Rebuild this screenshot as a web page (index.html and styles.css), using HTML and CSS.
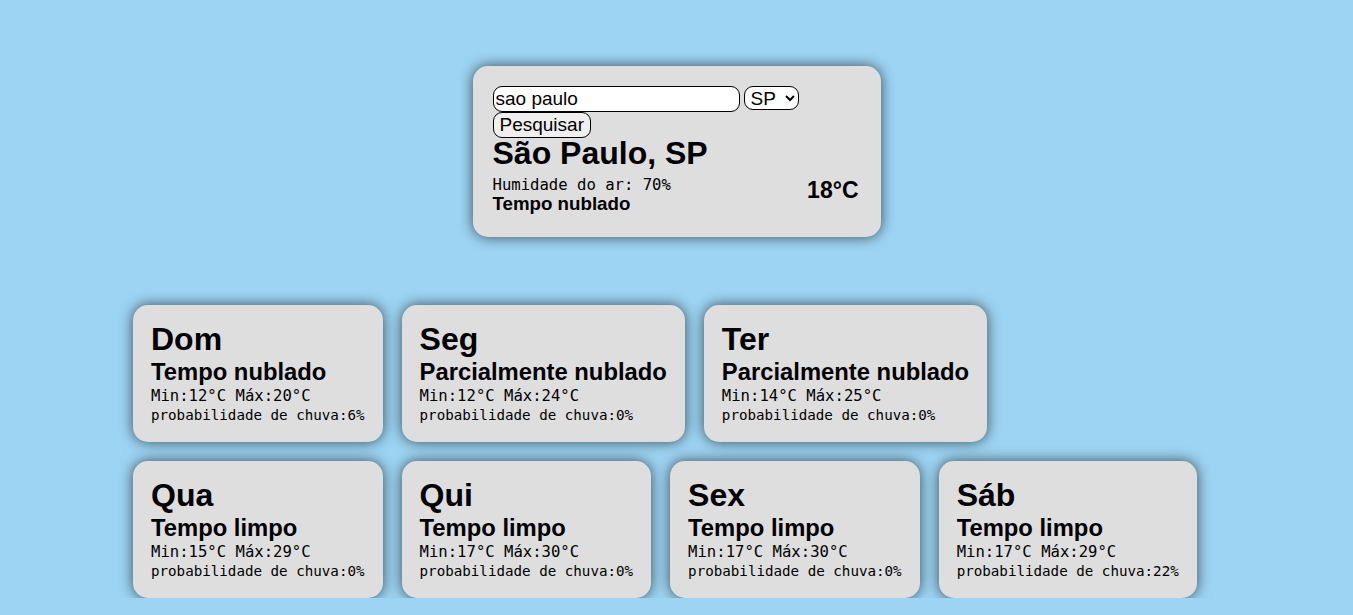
FILE: index.html
```html
<!DOCTYPE html>
<html lang="pt-BR">
<head>
    <meta charset="UTF-8">
    <meta name="viewport" content="width=device-width, initial-scale=1.0">
    <title>Previsão do Tempo</title>
    <link rel="stylesheet" href="styles.css">
</head>
<body>
    <!-- Cartão principal com a busca e o tempo atual -->
    <div class="clima-atual">
        <form class="busca">
            <div class="busca-linha">
                <input type="text" class="busca-cidade" value="sao paulo">
                <select class="busca-estado">
                    <option>SP</option>
                </select>
            </div>
            <button type="button" class="busca-botao">Pesquisar</button>
        </form>

        <h1>São Paulo, SP</h1>

        <div class="clima-info">
            <div>
                <p class="umidade">Humidade do ar: 70%</p>
                <p class="descricao">Tempo nublado</p>
            </div>
            <span class="temperatura">18°C</span>
        </div>
    </div>

    <!-- Previsão dos próximos dias -->
    <div class="previsao">
        <div class="dia">
            <h2>Dom</h2>
            <p class="dia-descricao">Tempo nublado</p>
            <p class="dia-temp">Min:12°C Máx:20°C</p>
            <p class="dia-chuva">probabilidade de chuva:6%</p>
        </div>
        <div class="dia">
            <h2>Seg</h2>
            <p class="dia-descricao">Parcialmente nublado</p>
            <p class="dia-temp">Min:12°C Máx:24°C</p>
            <p class="dia-chuva">probabilidade de chuva:0%</p>
        </div>
        <div class="dia">
            <h2>Ter</h2>
            <p class="dia-descricao">Parcialmente nublado</p>
            <p class="dia-temp">Min:14°C Máx:25°C</p>
            <p class="dia-chuva">probabilidade de chuva:0%</p>
        </div>
        <div class="dia">
            <h2>Qua</h2>
            <p class="dia-descricao">Tempo limpo</p>
            <p class="dia-temp">Min:15°C Máx:29°C</p>
            <p class="dia-chuva">probabilidade de chuva:0%</p>
        </div>
        <div class="dia">
            <h2>Qui</h2>
            <p class="dia-descricao">Tempo limpo</p>
            <p class="dia-temp">Min:17°C Máx:30°C</p>
            <p class="dia-chuva">probabilidade de chuva:0%</p>
        </div>
        <div class="dia">
            <h2>Sex</h2>
            <p class="dia-descricao">Tempo limpo</p>
            <p class="dia-temp">Min:17°C Máx:30°C</p>
            <p class="dia-chuva">probabilidade de chuva:0%</p>
        </div>
        <div class="dia">
            <h2>Sáb</h2>
            <p class="dia-descricao">Tempo limpo</p>
            <p class="dia-temp">Min:17°C Máx:29°C</p>
            <p class="dia-chuva">probabilidade de chuva:22%</p>
        </div>
    </div>
</body>
</html>
```

FILE: styles.css
```css
body {
    font-family: 'Liberation Sans', Arial, sans-serif;
    background-color: #9dd4f3;
    margin: 0;
    padding-top: 66px;
}

p {
    margin: 0;
}

/* Cartão do tempo atual */
.clima-atual {
    width: 366px;
    margin: 0 auto;
    padding: 20px 22px 23px 20px;
    background-color: #dedede;
    border-radius: 15px;
    box-shadow: 0 0 14px rgba(0, 0, 0, 0.65);
}

.busca-linha {
    display: flex;
    align-items: flex-start;
    gap: 4px;
}

.busca input,
.busca select,
.busca button {
    font-family: 'Liberation Sans', Arial, sans-serif;
    font-size: 19px;
    color: #000000;
    border: 1px solid #000000;
    border-radius: 9px;
    box-sizing: border-box;
    margin: 0;
}

.busca-cidade {
    width: 247px;
    height: 26px;
    padding: 0 2px;
    background: #ffffff;
}

.busca-estado {
    width: 55px;
    height: 24px;
    padding: 0 2px;
    background: #ffffff;
}

.busca-botao {
    display: block;
    height: 26px;
    padding: 0 6px;
    background: #efefef;
}

.clima-atual h1 {
    font-size: 32px;
    margin: 0;
    line-height: 30px;
}

.clima-info {
    display: flex;
    justify-content: space-between;
    align-items: flex-start;
    margin-top: 9px;
}

.umidade {
    font-family: 'DejaVu Sans Mono', monospace;
    font-size: 15.6px;
    line-height: 17px;
}

.descricao {
    font-weight: bold;
    font-size: 18.72px;
    line-height: 20px;
}

.temperatura {
    font-weight: bold;
    font-size: 23px;
    line-height: 24px;
    margin-top: 1px;
}

/* Previsão dos próximos dias */
.previsao {
    display: flex;
    flex-wrap: wrap;
    gap: 19px;
    width: 1087px;
    margin: 68px auto 0;
}

.dia {
    background-color: #dedede;
    padding: 15px 18px 17px 18px;
    border-radius: 15px;
    box-shadow: 0 0 14px rgba(0, 0, 0, 0.65);
}

.dia h2 {
    font-size: 32px;
    margin: 0;
    line-height: 38px;
}

.dia-descricao {
    font-weight: bold;
    font-size: 23.8px;
    line-height: 28px;
}

.dia-temp {
    font-family: 'DejaVu Sans Mono', monospace;
    font-size: 15.6px;
    line-height: 20px;
}

.dia-chuva {
    font-family: 'DejaVu Sans Mono', monospace;
    font-size: 14.2px;
    line-height: 19px;
}
```
